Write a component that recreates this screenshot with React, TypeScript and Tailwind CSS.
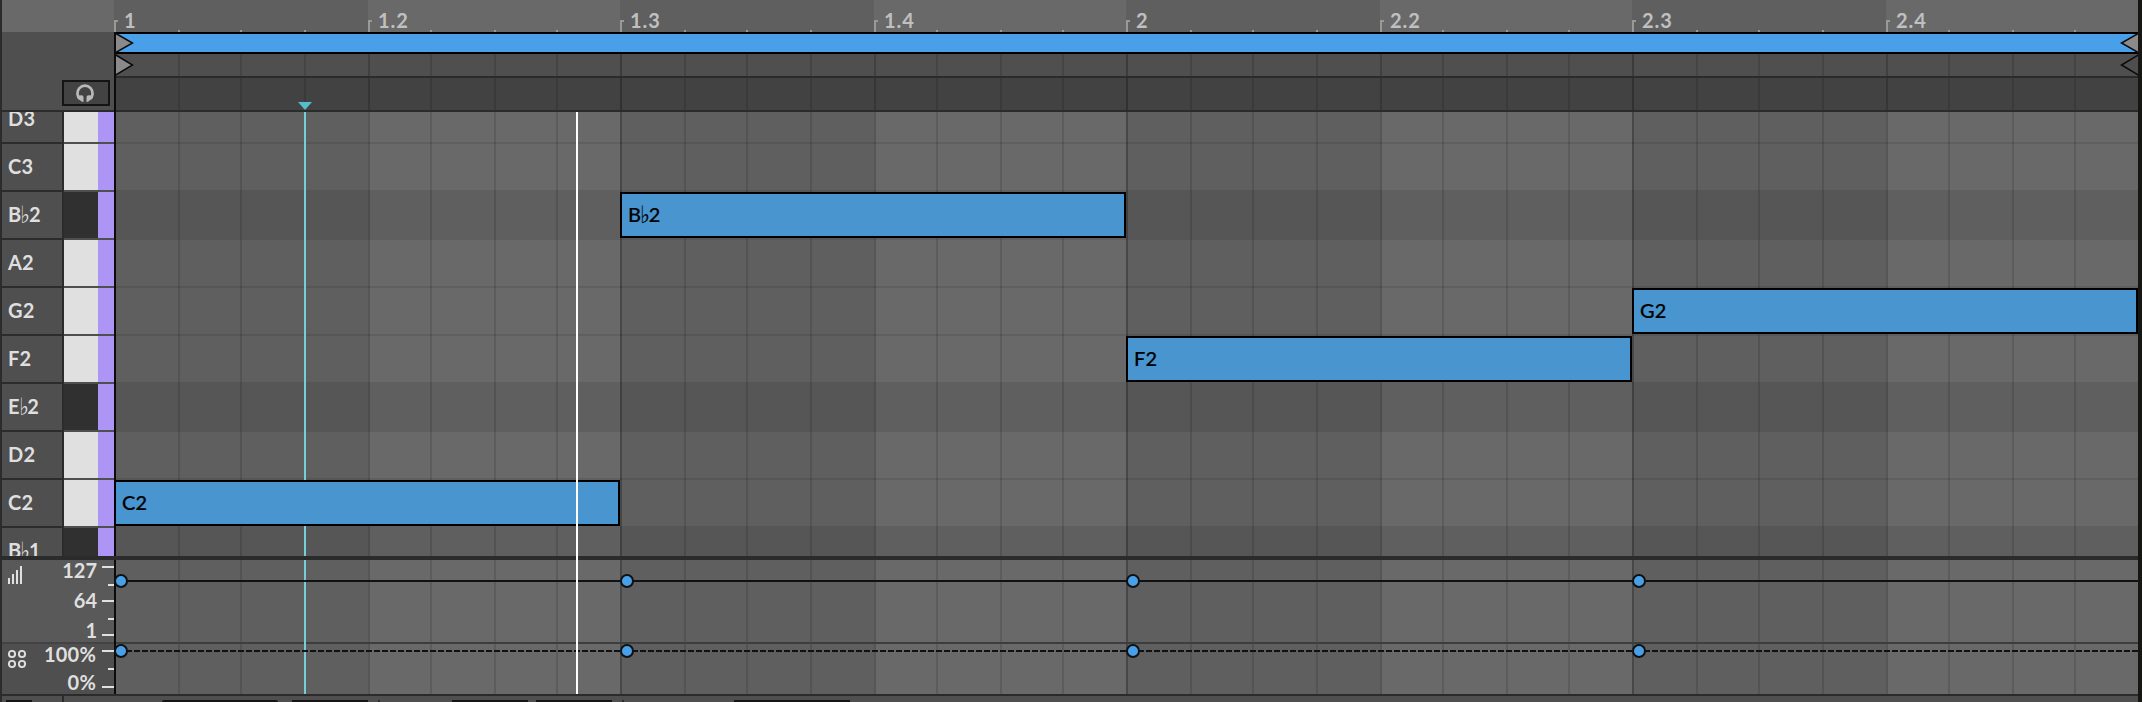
import React from "react";

const STEPS = 32;
const gridX = (step: number) => 2 * Math.round(57 + step * 31.625 + 1e-6) - 114;
const steps = Array.from({ length: STEPS }, (_, i) => ({
  index: i,
  width: gridX(i + 1) - gridX(i),
}));
const beats = ["1", "1.2", "1.3", "1.4", "2", "2.2", "2.3", "2.4"].map((label, i) => ({
  label,
  width: gridX(i * 4 + 4) - gridX(i * 4),
  light: i % 2 === 1,
}));

const keys = [
  { name: "D", octave: "3", black: false },
  { name: "C", octave: "3", black: false },
  { name: "B♭", octave: "2", black: true },
  { name: "A", octave: "2", black: false },
  { name: "G", octave: "2", black: false },
  { name: "F", octave: "2", black: false },
  { name: "E♭", octave: "2", black: true },
  { name: "D", octave: "2", black: false },
  { name: "C", octave: "2", black: false },
  { name: "B♭", octave: "1", black: true },
];

const notes = [
  { name: "C", octave: "2", step: 0, row: 8 },
  { name: "B♭", octave: "2", step: 8, row: 2 },
  { name: "F", octave: "2", step: 16, row: 5 },
  { name: "G", octave: "2", step: 24, row: 4 },
];

function Pitch({ name, octave }: { name: string; octave: string }) {
  return (
    <span className="-mt-0.5 flex items-baseline whitespace-nowrap tracking-[0.2px]">
      {name[0]}
      {name.length > 1 && (
        <span className="w-[7.5px] origin-bottom-left translate-y-px scale-x-85 font-['DejaVu_Sans'] text-[24px] font-normal leading-[0]">
          <span className="-ml-px">♭</span>
        </span>
      )}
      {octave}
    </span>
  );
}

function BeatStripes() {
  return (
    <div className="absolute inset-0 flex">
      {beats.map((b) => (
        <div
          key={b.label}
          className={b.light ? "bg-[#696969]" : "bg-[#5f5f5f]"}
          style={{ width: b.width }}
        />
      ))}
    </div>
  );
}

function GridLines() {
  return (
    <div className="absolute inset-0 flex">
      {steps.map((s) => (
        <div
          key={s.index}
          className={
            s.index % 8 === 0
              ? "border-l-2 border-black/25"
              : s.index % 4 === 0
                ? "border-l-2 border-black/18"
                : "border-l-2 border-black/12"
          }
          style={{ width: s.width }}
        />
      ))}
    </div>
  );
}

function Ruler() {
  return (
    <div className="relative h-8 w-[2024px]">
      <BeatStripes />
      <div className="absolute inset-0 flex items-end">
        {steps.map((s) => (
          <div key={s.index} style={{ width: s.width }}>
            {s.index % 4 === 0 ? (
              <div className="h-3 w-1 border-t-2 border-l-2 border-[#999999]" />
            ) : (
              <div className="h-0.5 w-0.5 bg-[#999999]" />
            )}
          </div>
        ))}
      </div>
      <div className="absolute inset-0 flex">
        {beats.map((b) => (
          <div
            key={b.label}
            className="pl-2.5 pt-2 text-[20px] font-bold leading-6 tracking-[0.9px] text-[#c0c0c0]"
            style={{ width: b.width }}
          >
            {b.label}
          </div>
        ))}
      </div>
    </div>
  );
}

function LoopRows() {
  return (
    <div className="relative flex h-20 w-[2024px] flex-col">
      <div className="h-[22px] border-y-2 border-black bg-[#4aa0e8]" />
      <div className="relative h-6 border-b-2 border-[#2b2b2b] bg-[#4f4f4f]">
        <GridLines />
      </div>
      <div className="relative h-[34px] border-b-2 border-[#2b2b2b] bg-[#424242]">
        <GridLines />
      </div>
      <svg className="absolute inset-0" width="2024" height="80">
        <g stroke="#0b0b0b" strokeWidth="1.5" fill="#8a8a8a">
          <path d="M1 1 L18.5 11 L1 21 Z" />
          <path d="M1 22.5 L18.5 33 L1 43.5 Z" />
          <path d="M2026 .5 L2007.5 11 L2026 21.5 Z" />
          <path d="M2026 22 L2007.5 33 L2026 44" fill="none" />
        </g>
        <path d="M184 70 H198 L191 78 Z" fill="#55bccd" />
      </svg>
      <div className="absolute inset-y-0 left-0 w-0.5 bg-[#0b0b0b]" />
    </div>
  );
}

function HeaderGutter() {
  return (
    <div className="flex h-20 w-[112px] items-end justify-end border-b-2 border-[#2b2b2b] bg-[#4f4f4f] pr-1 pb-1">
      <div className="flex h-[26px] w-12 items-center justify-center border-2 border-[#141414] bg-[#434343]">
        <svg className="-ml-0.5" width="20" height="20" viewBox="0 0 20 20">
          <path
            d="M5.2 16.2 A7.6 7.6 0 1 1 14.8 16.2"
            fill="none"
            stroke="#b9b9b9"
            strokeWidth="2.7"
          />
          <path
            d="M4 12.6 Q8.5 11.6 8.5 14 V19 Q5.6 19 4 15.2 Z M16 12.6 Q11.5 11.6 11.5 14 V19 Q14.4 19 16 15.2 Z"
            fill="#b9b9b9"
          />
        </svg>
      </div>
    </div>
  );
}

function Keyboard() {
  return (
    <div className="flex h-[444px] w-[112px] flex-col overflow-hidden bg-[#4f4f4f]">
      {keys.map((k, i) => (
        <div
          key={k.name + k.octave}
          className={i === 0 ? "-mt-4 flex h-12 shrink-0" : "flex h-12 shrink-0"}
        >
          <div className="flex w-[62px] items-center border-r-2 border-b-2 border-[#2b2b2b] pl-1.5 text-[20px] font-bold leading-6 text-[#dfdfdf]">
            <Pitch name={k.name} octave={k.octave} />
          </div>
          <div className={k.black ? "mb-0.5 w-[34px] bg-[#303030]" : "mb-0.5 w-[34px] bg-[#e0e0e0]"} />
          <div className="mb-0.5 w-4 bg-[#ad95f5]" />
        </div>
      ))}
    </div>
  );
}

function NoteGrid() {
  return (
    <div className="relative h-[444px] w-[2024px] overflow-hidden">
      <BeatStripes />
      <div className="absolute inset-0 flex flex-col">
        {keys.map((k, i) => (
          <div
            key={k.name + k.octave}
            className={i === 0 ? "-mt-4 flex h-12 shrink-0 flex-col" : "flex h-12 shrink-0 flex-col"}
          >
            <div className={k.black ? "h-[46px] bg-black/9" : "h-[46px]"} />
            <div className="h-0.5 bg-black/9" />
          </div>
        ))}
      </div>
      <GridLines />
      <div className="absolute inset-y-0 left-0 w-0.5 bg-[#0b0b0b]" />
      <div className="absolute inset-y-0 left-[190px] w-0.5 bg-[#76ced8]" />
      {notes.map((n) => (
        <div
          key={n.step}
          className="absolute flex h-[46px] items-center border-2 border-black bg-[#4895d0] pl-1.5 text-[20px] leading-6 font-medium text-black [-webkit-text-stroke:0.2px_black]"
          style={{
            left: gridX(n.step),
            width: gridX(n.step + 8) - gridX(n.step),
            top: n.row * 48 - 16,
          }}
        >
          <Pitch name={n.name} octave={n.octave} />
        </div>
      ))}
    </div>
  );
}

function VelocityScale() {
  return (
    <div className="flex h-[84px] w-[112px] border-b-2 border-[#434343] bg-[#595959]">
      <svg className="mt-1.5 ml-1.5 shrink-0" width="16" height="18" fill="#e0e0e0">
        <rect x="0" y="12" width="2" height="6" />
        <rect x="4" y="8" width="2" height="10" />
        <rect x="8" y="4" width="2" height="14" />
        <rect x="12" y="0" width="2" height="18" />
      </svg>
      <div className="-mt-px flex flex-1 flex-col items-end pr-[5px] text-[20px] font-bold leading-[30px] text-[#dfdfdf]">
        <span className="-mt-1">127</span>
        <span>64</span>
        <span>1</span>
      </div>
      <div className="flex w-3 flex-col items-end pt-1.5">
        <div className="h-[18px] w-3 border-t-2 border-[#e0e0e0]" />
        <div className="h-4 w-1.5 border-t-2 border-[#e0e0e0]" />
        <div className="h-[18px] w-3 border-t-2 border-[#e0e0e0]" />
        <div className="h-4 w-1.5 border-t-2 border-[#e0e0e0]" />
        <div className="h-0.5 w-3 bg-[#e0e0e0]" />
      </div>
    </div>
  );
}

function ChanceScale() {
  return (
    <div className="flex h-[50px] w-[112px] bg-[#4f4f4f]">
      <svg
        className="mt-1.5 ml-1.5 shrink-0"
        width="18"
        height="18"
        fill="none"
        stroke="#e0e0e0"
        strokeWidth="1.9"
      >
        <circle cx="4" cy="4" r="3.1" />
        <circle cx="14" cy="4" r="3.1" />
        <circle cx="4" cy="14" r="3.1" />
        <circle cx="14" cy="14" r="3.1" />
      </svg>
      <div className="flex flex-1 flex-col items-end pr-1.5 text-[20px] font-bold leading-7 tracking-[0.2px] text-[#dfdfdf]">
        <span className="-mt-1">100%</span>
        <span>0%</span>
      </div>
      <div className="flex w-3 flex-col items-end pt-1.5">
        <div className="h-[18px] w-3 border-t-2 border-[#e0e0e0]" />
        <div className="h-[18px] w-1.5 border-t-2 border-[#e0e0e0]" />
        <div className="h-0.5 w-3 bg-[#e0e0e0]" />
      </div>
    </div>
  );
}

function Lanes() {
  return (
    <div className="relative h-[134px] w-[2024px]">
      <BeatStripes />
      <GridLines />
      <div className="absolute inset-x-0 top-[82px] h-0.5 bg-[#3d3d3d]" />
      <div className="absolute inset-y-0 left-0 w-0.5 bg-[#0b0b0b]" />
      <div className="absolute inset-y-0 left-[190px] w-0.5 bg-[#76ced8]" />
      <svg className="absolute inset-0" width="2024" height="134">
        {notes.map((n) => {
          const x = gridX(n.step);
          return (
            <g key={n.step} stroke="#111111" strokeWidth="2">
              <path d={`M${x} 21 H${x + 506}`} />
              <path d={`M${x + 12} 91 H${x + 506}`} strokeDasharray="6 2" />
            </g>
          );
        })}
        {notes.map((n) => (
          <g key={n.step} stroke="#111111" strokeWidth="2" fill="#4aa0e8">
            <circle cx={gridX(n.step) + 7} cy="21" r="6" />
            <circle cx={gridX(n.step) + 7} cy="91" r="6" />
          </g>
        ))}
      </svg>
    </div>
  );
}

function BottomStrip() {
  return (
    <div className="flex h-1.5 items-end bg-[#4f4f4f]">
      <div className="ml-1 h-0.5 w-[26px] bg-[#161414]" />
      <div className="ml-[30px] h-1.5 w-0.5 bg-[#2b2b2b]" />
      <div className="ml-[98px] h-0.5 w-[116px] rounded-t-[3px] bg-[#161414]" />
      <div className="ml-3.5 h-0.5 w-[76px] bg-[#161414]" />
      <div className="ml-2.5 h-0.5 w-0.5 bg-[#2b2b2b]" />
      <div className="ml-[72px] h-0.5 w-[76px] bg-[#161414]" />
      <div className="ml-2 h-0.5 w-[76px] bg-[#161414]" />
      <div className="ml-2.5 h-0.5 w-0.5 bg-[#2b2b2b]" />
      <div className="ml-[110px] h-0.5 w-[116px] bg-[#161414]" />
    </div>
  );
}

export default function App() {
  return (
    <div className="flex h-[702px] w-[2142px] overflow-hidden bg-[#2b2b2b] font-['Lato',sans-serif]">
      <div className="w-0.5 shrink-0 bg-[#2b2b2b]" />
      <div className="relative flex w-[2136px] shrink-0 flex-col">
        <div className="flex">
          <div className="h-8 w-[112px] bg-[#696969]" />
          <Ruler />
        </div>
        <div className="flex">
          <HeaderGutter />
          <LoopRows />
        </div>
        <div className="flex">
          <Keyboard />
          <NoteGrid />
        </div>
        <div className="h-1 bg-[#2b2b2b]" />
        <div className="flex">
          <div className="flex flex-col">
            <VelocityScale />
            <ChanceScale />
          </div>
          <Lanes />
        </div>
        <div className="h-0.5 bg-[#2b2b2b]" />
        <BottomStrip />
        <div className="absolute top-[112px] left-[574px] h-[582px] w-0.5 bg-white" />
      </div>
      <div className="w-1 shrink-0 bg-[#161613]" />
    </div>
  );
}
